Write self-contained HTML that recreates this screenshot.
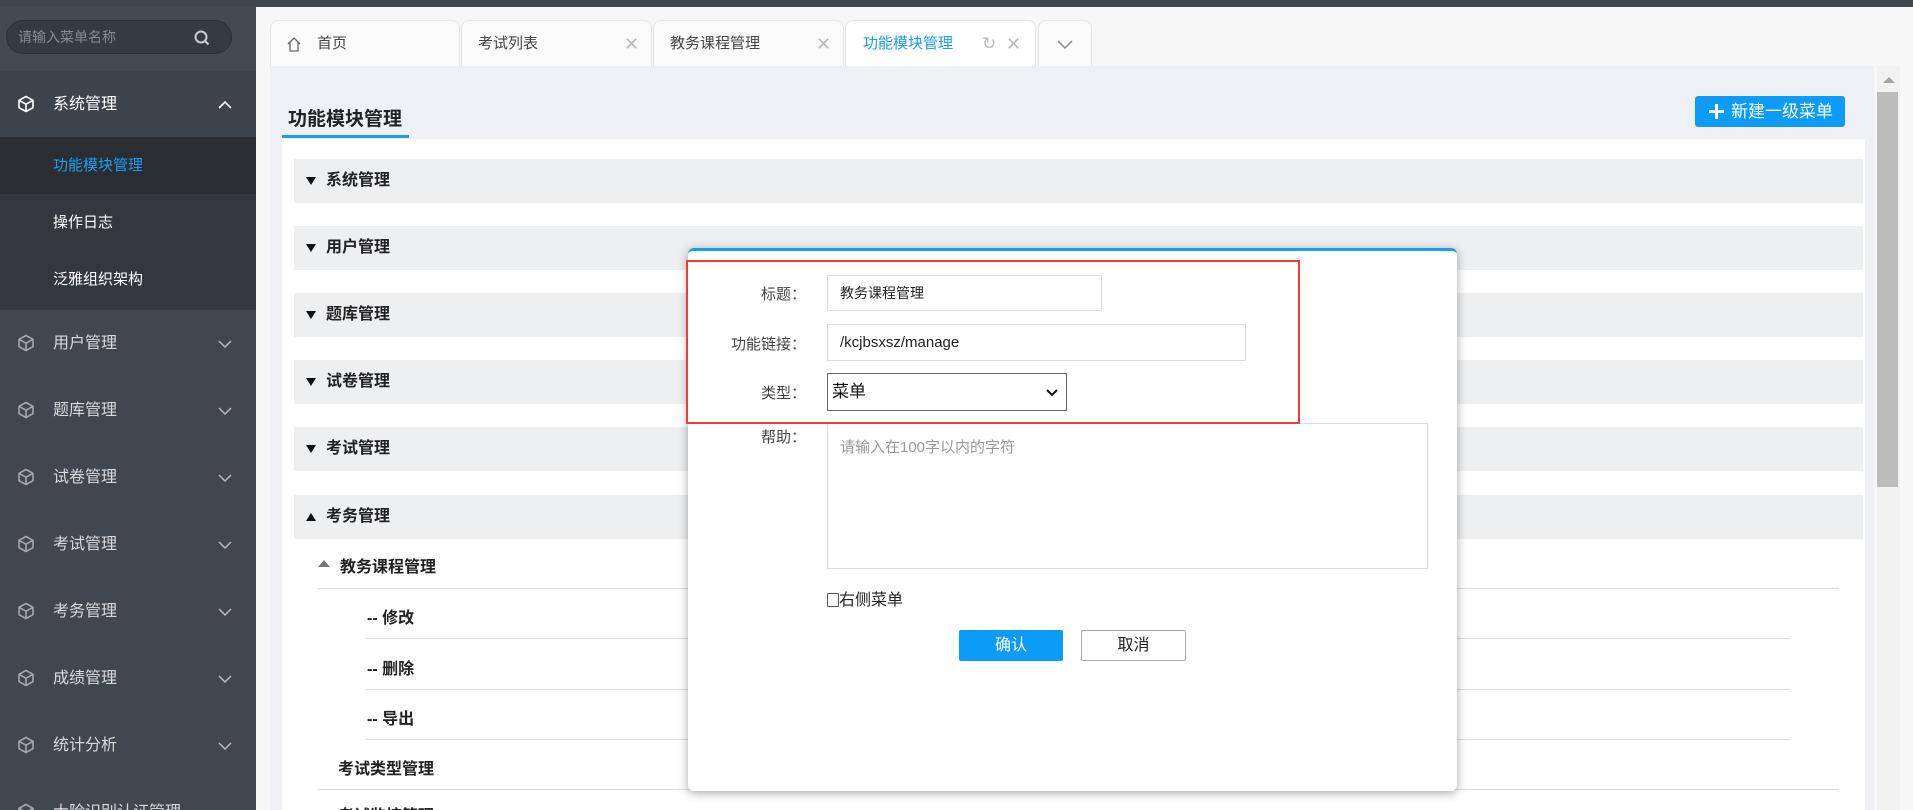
<!DOCTYPE html>
<html style="width:1913px;height:810px;overflow:hidden"><head><meta charset="utf-8"><style>
*{box-sizing:border-box;margin:0;padding:0}
body{width:1913px;height:810px;overflow:hidden;position:relative;background:#fff;font-family:"Liberation Sans","Noto Sans CJK SC",sans-serif;}
.abs{position:absolute}
.topbar{left:0;top:0;width:1913px;height:7px;background:#40474f}
.side{left:0;top:0;width:256px;height:810px;background:#40474f}
.search{left:6px;top:20px;width:226px;height:34px;border-radius:17px;background:#353b42;border:1px solid #2c3137;color:#858b92;font-size:14px;line-height:32px;padding-left:11px}
.nav{position:absolute;left:0;width:256px;height:67px;color:#d8dadc;font-size:16px;line-height:67px;padding-left:53px;overflow:hidden}
.nav svg.cube{position:absolute;left:17px;top:24px}
.nav svg.chev{position:absolute;left:218px;top:29px}
.sub{position:absolute;left:0;width:256px;height:57px;line-height:57px;padding-left:53px;font-size:15px;color:#fff;background:#33383f}
.main{left:256px;top:7px;width:1657px;height:803px;background:#f7f7f7}
.tab{position:absolute;top:20px;height:47px;background:#fafafb;border:1px solid #e3e5ea;border-bottom:none;border-radius:8px 8px 0 0;font-size:15px;color:#444;line-height:46px}
.panel{left:270px;top:66px;width:1604px;height:744px;background:#eef0f3}
.white{left:282px;top:139px;width:1583px;height:671px;background:#fff}
.row{position:absolute;left:294px;width:1569px;height:44px;background:#eeeff1;font-size:16px;font-weight:bold;color:#222;line-height:44px;padding-left:32px}
.row i{position:absolute;left:12px;top:18px;width:0;height:0;border-left:5px solid transparent;border-right:5px solid transparent;border-top:8px solid #111}
.item{position:absolute;font-size:16px;font-weight:bold;color:#222}
.line{position:absolute;height:1px;background:#ddd}
.modal{left:688px;top:248px;width:769px;height:543px;background:#fff;border-top:3px solid #1b9cf0;border-radius:6px;box-shadow:0 2px 10px rgba(0,0,0,.35)}
.lbl{position:absolute;font-size:15px;color:#444;text-align:right;width:120px;left:686px}
.inp{position:absolute;border:1px solid #ddd;background:#fff;font-size:14px;color:#222;padding-left:12px}
</style></head><body>
<div class="abs side"></div>
<div class="abs" style="left:0;top:0;width:256px;height:72px;background:#434a52"></div>
<div class="abs search">请输入菜单名称
<svg class="abs" style="left:186px;top:8px" width="18" height="18" viewBox="0 0 18 18"><circle cx="8" cy="8" r="5.5" fill="none" stroke="#c9ccd0" stroke-width="2"/><path d="M12 12l3.5 3.5" stroke="#c9ccd0" stroke-width="2"/></svg></div>
<svg width="0" height="0" style="position:absolute"><defs><g id="cube"><path d="M9 1.5l7 3.8v7.4l-7 3.8-7-3.8V5.3z M2 5.3l7 3.9 7-3.9 M9 9.2v7.3" fill="none" stroke="currentColor" stroke-width="1.6" stroke-linejoin="round"/></g></defs></svg>
<div class="nav" style="top:71px;color:#fff;background:#3d444c"><svg class="cube" width="18" height="18" style="color:#fff"><use href="#cube"/></svg>系统管理<svg class="chev" width="14" height="10"><path d="M1 8l6-6 6 6" fill="none" stroke="#fff" stroke-width="1.6"/></svg></div>
<div class="sub" style="top:137px;background:#2a2e33;color:#1c9cf2;height:57px">功能模块管理</div>
<div class="sub" style="top:194px">操作日志</div>
<div class="sub" style="top:251px;height:59px">泛雅组织架构</div>
<div class="nav" style="top:310px"><svg class="cube" width="18" height="18" style="color:#a4a8ad"><use href="#cube"/></svg>用户管理<svg class="chev" width="14" height="10"><path d="M1 2l6 6 6-6" fill="none" stroke="#bbb" stroke-width="1.5"/></svg></div>
<div class="nav" style="top:377px"><svg class="cube" width="18" height="18" style="color:#a4a8ad"><use href="#cube"/></svg>题库管理<svg class="chev" width="14" height="10"><path d="M1 2l6 6 6-6" fill="none" stroke="#bbb" stroke-width="1.5"/></svg></div>
<div class="nav" style="top:444px"><svg class="cube" width="18" height="18" style="color:#a4a8ad"><use href="#cube"/></svg>试卷管理<svg class="chev" width="14" height="10"><path d="M1 2l6 6 6-6" fill="none" stroke="#bbb" stroke-width="1.5"/></svg></div>
<div class="nav" style="top:511px"><svg class="cube" width="18" height="18" style="color:#a4a8ad"><use href="#cube"/></svg>考试管理<svg class="chev" width="14" height="10"><path d="M1 2l6 6 6-6" fill="none" stroke="#bbb" stroke-width="1.5"/></svg></div>
<div class="nav" style="top:578px"><svg class="cube" width="18" height="18" style="color:#a4a8ad"><use href="#cube"/></svg>考务管理<svg class="chev" width="14" height="10"><path d="M1 2l6 6 6-6" fill="none" stroke="#bbb" stroke-width="1.5"/></svg></div>
<div class="nav" style="top:645px"><svg class="cube" width="18" height="18" style="color:#a4a8ad"><use href="#cube"/></svg>成绩管理<svg class="chev" width="14" height="10"><path d="M1 2l6 6 6-6" fill="none" stroke="#bbb" stroke-width="1.5"/></svg></div>
<div class="nav" style="top:712px"><svg class="cube" width="18" height="18" style="color:#a4a8ad"><use href="#cube"/></svg>统计分析<svg class="chev" width="14" height="10"><path d="M1 2l6 6 6-6" fill="none" stroke="#bbb" stroke-width="1.5"/></svg></div>
<div class="nav" style="top:779px;height:31px"><svg class="cube" width="18" height="18" style="color:#a4a8ad"><use href="#cube"/></svg>大险识别认证管理</div>

<div class="abs main"></div>
<div class="abs topbar"></div>
<div class="tab" style="left:270px;width:190px;padding-left:46px"><svg class="abs" style="left:15px;top:15px" width="16" height="16"><path d="M2 8L8 2l6 6M4 6.5V15h8V6.5" fill="none" stroke="#666" stroke-width="1.3"/></svg>首页</div>
<div class="tab" style="left:461px;width:191px;padding-left:16px">考试列表<span class="abs" style="left:162px;top:0;color:#bbb;font-size:18px">✕</span></div>
<div class="tab" style="left:653px;width:191px;padding-left:16px">教务课程管理<span class="abs" style="left:162px;top:0;color:#bbb;font-size:18px">✕</span></div>
<div class="tab" style="left:845px;width:191px;padding-left:17px;background:#fff;color:#1c9cf2">功能模块管理<span class="abs" style="left:136px;top:0;color:#bbb;font-size:17px">↻</span><span class="abs" style="left:160px;top:0;color:#bbb;font-size:18px">✕</span></div>
<div class="tab" style="left:1038px;width:54px"><svg class="abs" style="left:18px;top:19px" width="16" height="10"><path d="M1 1l7 7 7-7" fill="none" stroke="#888" stroke-width="1.5"/></svg></div>

<div class="abs panel"></div>
<div class="abs" style="left:288px;top:104px;font-size:19px;font-weight:bold;color:#222">功能模块管理</div>
<div class="abs" style="left:282px;top:135px;width:127px;height:3px;background:#1b9cf0"></div>
<div class="abs" style="left:1695px;top:96px;width:150px;height:31px;background:#0c9bf7;border-radius:3px;color:#fff;font-size:17px;line-height:31px;padding-left:36px"><svg class="abs" style="left:14px;top:8px" width="15" height="15"><path d="M7.5 0v15M0 7.5h15" stroke="#fff" stroke-width="3"/></svg>新建一级菜单</div>
<div class="abs white"></div>
<div class="abs" style="left:1877px;top:66px;width:23px;height:744px;background:#f1f1f1"></div>
<div class="abs" style="left:1883px;top:77px;width:0;height:0;border-left:6px solid transparent;border-right:6px solid transparent;border-bottom:6px solid #a3a3a3"></div>
<div class="abs" style="left:1877px;top:92px;width:21px;height:395px;background:#bcbcbc"></div>

<div class="row" style="top:159px"><i></i>系统管理</div>
<div class="row" style="top:226px"><i></i>用户管理</div>
<div class="row" style="top:293px"><i></i>题库管理</div>
<div class="row" style="top:360px"><i></i>试卷管理</div>
<div class="row" style="top:427px"><i></i>考试管理</div>
<div class="row" style="top:495px"><i style="border-top:none;border-bottom:8px solid #111"></i>考务管理</div>
<div class="abs" style="left:318px;top:560px;width:0;height:0;border-left:6px solid transparent;border-right:6px solid transparent;border-bottom:7px solid #777"></div>
<div class="item" style="left:340px;top:553px">教务课程管理</div>
<div class="line" style="left:318px;top:588px;width:1521px"></div>
<div class="item" style="left:367px;top:604px">-- 修改</div>
<div class="line" style="left:366px;top:638px;width:1424px"></div>
<div class="item" style="left:367px;top:655px">-- 删除</div>
<div class="line" style="left:366px;top:689px;width:1424px"></div>
<div class="item" style="left:367px;top:705px">-- 导出</div>
<div class="line" style="left:366px;top:739px;width:1424px"></div>
<div class="item" style="left:338px;top:755px">考试类型管理</div>
<div class="line" style="left:318px;top:789px;width:1521px"></div>
<div class="item" style="left:338px;top:802px">考试监控管理</div>

<div class="abs modal"></div>
<div class="lbl" style="top:283px">标题：</div>
<div class="inp" style="left:827px;top:275px;width:275px;height:36px;line-height:34px;font-size:14px">教务课程管理</div>
<div class="lbl" style="top:333px">功能链接：</div>
<div class="inp" style="left:827px;top:324px;width:419px;height:37px;line-height:35px;font-size:15px">/kcjbsxsz/manage</div>
<div class="lbl" style="top:382px">类型：</div>
<div class="inp" style="left:827px;top:373px;width:240px;height:38px;line-height:36px;border:1px solid #666;padding-left:4px;font-size:17px;color:#111">菜单<svg class="abs" style="left:218px;top:15px" width="12" height="8"><path d="M1 1l5 5 5-5" fill="none" stroke="#111" stroke-width="2"/></svg></div>
<div class="lbl" style="top:426px">帮助：</div>
<div class="inp" style="left:827px;top:423px;width:601px;height:146px;padding-top:12px;color:#999;font-size:15px">请输入在100字以内的字符</div>
<div class="abs" style="left:827px;top:586px;font-size:16px;color:#222"><span style="display:inline-block;width:12px;height:14px;border:1px solid #555;border-radius:2px;vertical-align:-2px"></span>右侧菜单</div>
<div class="abs" style="left:959px;top:630px;width:104px;height:31px;background:#0c9bf7;border-radius:2px;color:#fff;font-size:16px;text-align:center;line-height:31px">确认</div>
<div class="abs" style="left:1081px;top:630px;width:105px;height:31px;border:1px solid #aaa;border-radius:2px;color:#222;font-size:16px;text-align:center;line-height:29px;background:#fff">取消</div>
<div class="abs" style="left:686px;top:260px;width:614px;height:164px;border:2px solid #ef3b3b"></div>
</body></html>
